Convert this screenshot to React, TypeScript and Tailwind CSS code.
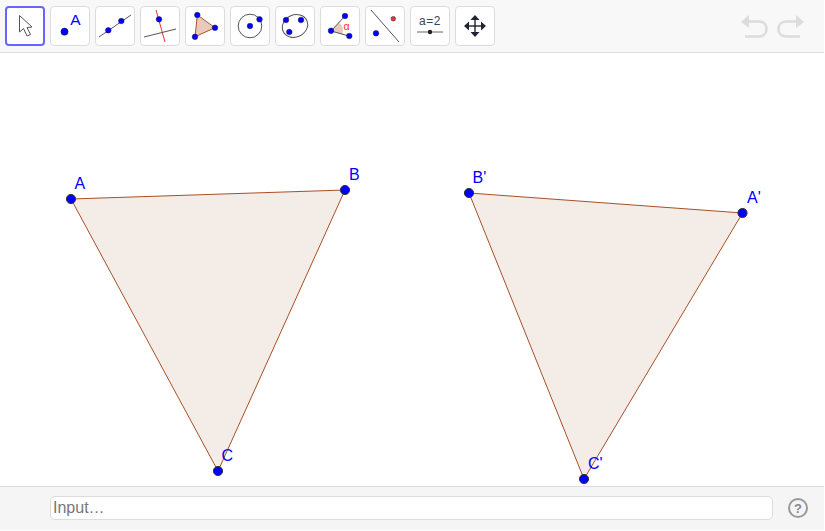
const BLUE = "#0000ff"

function Dot({ x, y, r = 2.8, fill = BLUE }: { x: number; y: number; r?: number; fill?: string }) {
  return <circle cx={x} cy={y} r={r} fill={fill} stroke="#1a1a40" strokeWidth={0.5} />
}

// icon coordinates are page pixels, the viewBox of each tool shifts them into its button
const icons = [
  <path key="move" d="M19.5 15.5V32L23.5 28.5L27 36L30.5 34.5L27 27.5L32 27Z" fill="#fff" stroke="#555" strokeWidth={1} strokeLinejoin="miter" />,
  <g key="point">
    <circle cx={64.5} cy={31.7} r={3.6} fill={BLUE} stroke="#1a1a40" strokeWidth={0.5} />
    <text x={70.3} y={25} fontSize={15.5} fill={BLUE} fontFamily="Liberation Sans, sans-serif">A</text>
  </g>,
  <g key="line">
    <line x1={99} y1={37} x2={131} y2={15} stroke="#555" strokeWidth={1} />
    <Dot x={108.3} y={30.3} />
    <Dot x={121.3} y={21} />
  </g>,
  <g key="perp">
    <line x1={156} y1={10} x2={165} y2={42} stroke="#f03030" strokeWidth={1} />
    <line x1={144} y1={37} x2={176} y2={29} stroke="#555" strokeWidth={1} />
    <Dot x={159} y={19.3} />
  </g>,
  <g key="polygon">
    <path d="M197.3 15L215 27.7L195 36.8Z" fill="#e8c9bc" stroke="#a5582f" strokeWidth={1} />
    <Dot x={197.3} y={15} />
    <Dot x={215} y={27.7} />
    <Dot x={195} y={36.8} />
  </g>,
  <g key="circle">
    <circle cx={250} cy={26} r={11.8} fill="none" stroke="#555" strokeWidth={1} />
    <Dot x={250} y={26} />
    <Dot x={259.5} y={19.3} />
  </g>,
  <g key="conic">
    <ellipse cx={295} cy={26} rx={13} ry={11} transform="rotate(-25 295 26)" fill="none" stroke="#555" strokeWidth={1} />
    <Dot x={286} y={20} />
    <Dot x={301} y={20} />
    <Dot x={289.3} y={32} />
  </g>,
  <g key="angle">
    <path d="M331 31L339 22.5A12 12 0 0 1 342.5 34.5Z" fill="#e8c9bc" />
    <path d="M345 16L331 31L349 36" fill="none" stroke="#555" strokeWidth={1} />
    <text x={343.5} y={29.5} fontSize={10.5} fill="#f03030" fontFamily="Liberation Sans, sans-serif">α</text>
    <Dot x={345} y={16} />
    <Dot x={331} y={30.7} />
    <Dot x={349.3} y={36} />
  </g>,
  <g key="reflect">
    <line x1={371} y1={10} x2={399} y2={42} stroke="#555" strokeWidth={1} />
    <Dot x={393.3} y={18.7} r={2.3} fill="#f03030" />
    <Dot x={376} y={33.3} />
  </g>,
  <g key="slider">
    <text x={430} y={25} fontSize={12} letterSpacing={0.6} textAnchor="middle" fill="#444" fontFamily="Liberation Sans, sans-serif">a=2</text>
    <line x1={417} y1={32} x2={443} y2={32} stroke="#666" strokeWidth={1} />
    <circle cx={430} cy={32} r={2.2} fill="#222" />
  </g>,
  <g key="translate" fill="#222233">
    <rect x={474.3} y={18} width={1.4} height={16} />
    <rect x={467} y={25.3} width={16} height={1.4} />
    <path d="M475 15L479.5 20H470.5Z" />
    <path d="M475 37L479.5 32H470.5Z" />
    <path d="M464 26L469 21.5V30.5Z" />
    <path d="M486 26L481 21.5V30.5Z" />
  </g>,
]

function ToolButton({ index, selected }: { index: number; selected: boolean }) {
  return (
    <button
      className={
        selected
          ? "w-10 h-10 shrink-0 rounded-[4px] bg-white border-2 border-[#6666ff]"
          : "w-10 h-10 shrink-0 rounded-[4px] bg-white border border-[#dcdcdc]"
      }
    >
      <svg
        width={selected ? 36 : 38}
        height={selected ? 36 : 38}
        viewBox={selected ? `${7 + 45 * index} 8 36 36` : `${6 + 45 * index} 7 38 38`}
        className="block"
      >
        {icons[index]}
      </svg>
    </button>
  )
}

function UndoRedo() {
  return (
    <div className="flex gap-[9px] mr-[20px] mt-[9px]">
      <svg width={27} height={23} viewBox="741 15 27 23" className="block">
        <path d="M741 22L749 15V28Z" fill="#dcdcdc" />
        <path d="M748 21.5H759C764 21.5 766.5 25 766.5 29C766.5 33 764 36.5 759 36.5H745" fill="none" stroke="#dcdcdc" strokeWidth={2.6} />
      </svg>
      <svg width={27} height={23} viewBox="777 15 27 23" className="block">
        <path d="M804 22L796 15V28Z" fill="#dcdcdc" />
        <path d="M797 21.5H786C781 21.5 778.5 25 778.5 29C778.5 33 781 36.5 786 36.5H800" fill="none" stroke="#dcdcdc" strokeWidth={2.6} />
      </svg>
    </div>
  )
}

function Triangle({ points }: { points: { x: number; y: number; label: string; lx: number; ly: number }[] }) {
  return (
    <g>
      <polygon
        points={points.map((p) => `${p.x},${p.y}`).join(" ")}
        fill="#8f4a10"
        fillOpacity={0.1}
        stroke="#993300"
        strokeOpacity={0.85}
        strokeWidth={1}
      />
      {points.map((p) => (
        <g key={p.label}>
          <circle cx={p.x} cy={p.y} r={4.6} fill={BLUE} stroke="#333" strokeWidth={1} />
          <text x={p.lx} y={p.ly} fontSize={16} fill={BLUE} fontFamily="Liberation Sans, sans-serif">
            {p.label}
          </text>
        </g>
      ))}
    </g>
  )
}

export default function App() {
  return (
    <div className="w-[824px] h-[530px] flex flex-col bg-white font-['Liberation_Sans',sans-serif]">
      <div className="h-[53px] shrink-0 flex justify-between items-start bg-[#f8f8f8] border-b border-[#e0e0e0] pt-[6px] pl-[5px]">
        <div className="flex gap-[5px]">
          {icons.map((_, i) => (
            <ToolButton key={i} index={i} selected={i === 0} />
          ))}
        </div>
        <UndoRedo />
      </div>
      <div className="flex-1 min-h-0">
        <svg width={824} height={433} viewBox="0 53 824 433" className="block">
          <Triangle
            points={[
              { x: 71, y: 199, label: "A", lx: 74.5, ly: 189 },
              { x: 345, y: 190, label: "B", lx: 349, ly: 180 },
              { x: 218, y: 471, label: "C", lx: 221.5, ly: 461 },
            ]}
          />
          <Triangle
            points={[
              { x: 469, y: 193, label: "B'", lx: 472.5, ly: 183 },
              { x: 742.5, y: 213, label: "A'", lx: 747, ly: 203 },
              { x: 584, y: 479, label: "C'", lx: 588, ly: 468.5 },
            ]}
          />
        </svg>
      </div>
      <div className="h-[44px] shrink-0 flex items-start bg-[#f5f5f5] border-t border-[#dcdcdc] pt-[9px] pl-[50px]">
        <input
          placeholder="Input…"
          className="w-[723px] h-6 rounded-[5px] bg-white border border-[#dcdcdc] px-[2px] text-base outline-none placeholder:text-[#777]"
        />
        <div className="ml-[15px] mt-[2px] w-5 h-5 rounded-full border-2 border-[#999] flex items-center justify-center text-[13px] leading-none font-bold text-[#888]">
          ?
        </div>
      </div>
    </div>
  )
}
